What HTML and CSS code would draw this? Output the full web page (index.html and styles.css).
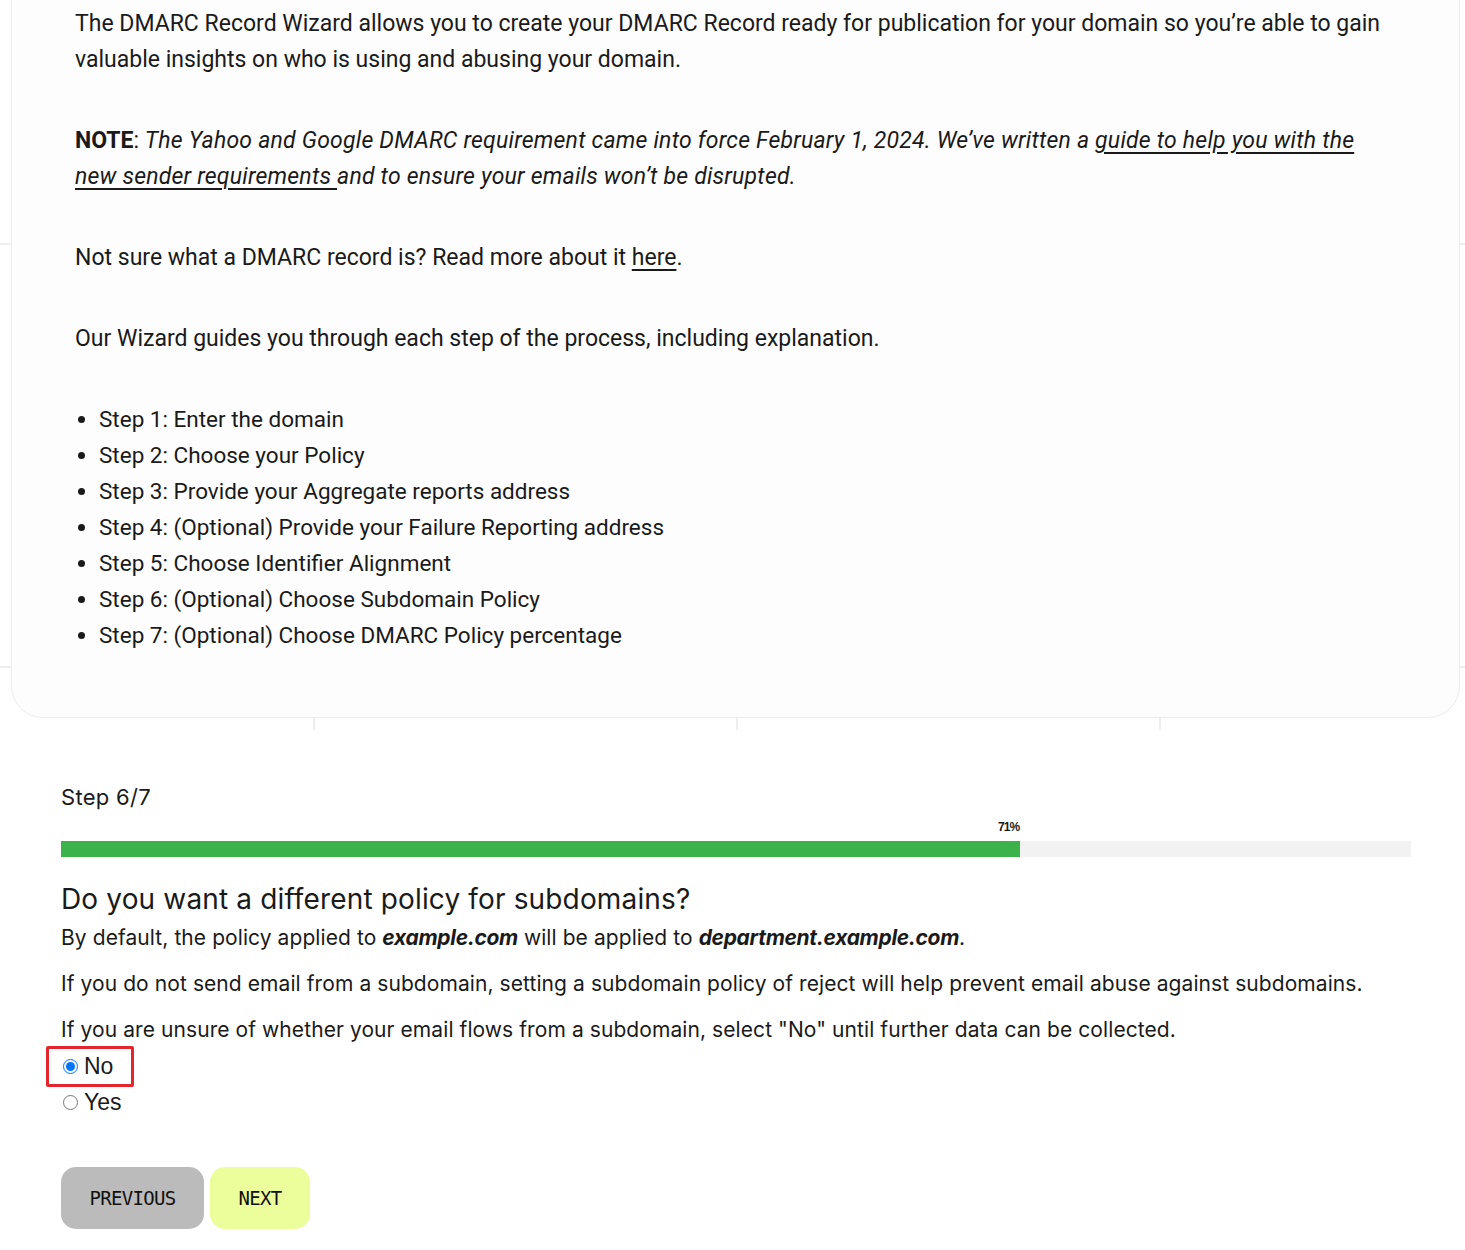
FILE: index.html
```html
<!DOCTYPE html>
<html lang="en">
<head>
    <meta charset="UTF-8">
    <meta name="viewport" content="width=device-width, initial-scale=1.0">
    <title>DMARC Record Wizard</title>
    <link rel="stylesheet" href="styles.css">
</head>
<body>
    <div class="grid-section">
        <div class="intro-card">
            <p>The DMARC Record Wizard allows you to create your DMARC Record ready for publication for your domain so you’re able to gain valuable insights on who is using and abusing your domain.</p>
            <p><strong>NOTE</strong>: <em>The Yahoo and Google DMARC requirement came into force February 1, 2024. We’ve written a <a href="#">guide to help you with the new sender requirements </a>and to ensure your emails won’t be disrupted.</em></p>
            <p>Not sure what a DMARC record is? Read more about it <a href="#">here</a>.</p>
            <p>Our Wizard guides you through each step of the process, including explanation.</p>
            <ul class="steps">
                <li>Step 1: Enter the domain</li>
                <li>Step 2: Choose your Policy</li>
                <li>Step 3: Provide your Aggregate reports address</li>
                <li>Step 4: (Optional) Provide your Failure Reporting address</li>
                <li>Step 5: Choose Identifier Alignment</li>
                <li>Step 6: (Optional) Choose Subdomain Policy</li>
                <li>Step 7: (Optional) Choose DMARC Policy percentage</li>
            </ul>
        </div>
    </div>

    <div class="wizard">
        <div class="step-label">Step 6/7</div>
        <div class="progress">
            <div class="progress-text" style="width: 71%">71%</div>
            <div class="progress-track">
                <div class="progress-fill" style="width: 71%"></div>
            </div>
        </div>

        <h2>Do you want a different policy for subdomains?</h2>
        <p class="lead">By default, the policy applied to <em>example.com</em> will be applied to <em>department.example.com</em>.</p>
        <p>If you do not send email from a subdomain, setting a subdomain policy of reject will help prevent email abuse against subdomains.</p>
        <p class="last">If you are unsure of whether your email flows from a subdomain, select "No" until further data can be collected.</p>

        <div class="options">
            <label class="option selected"><input type="radio" name="sp" value="no" checked> No</label>
            <label class="option"><input type="radio" name="sp" value="yes"> Yes</label>
        </div>

        <div class="actions">
            <button class="btn btn-prev">PREVIOUS</button>
            <button class="btn btn-next">NEXT</button>
        </div>
    </div>
</body>
</html>
```

FILE: styles.css
```css
body {
    margin: 0;
    font-family: Roboto, sans-serif;
    color: #1a1a1a;
    background: #fff;
}
.grid-section {
    height: 730px;
    overflow: hidden;
    background-color: #fff;
    background-image:
        linear-gradient(to right, #eeeeee 2px, transparent 2px),
        linear-gradient(to bottom, #eeeeee 2px, transparent 2px);
    background-size: 423px 423px;
    background-position: 313px 243px;
}
.intro-card {
    margin: -40px 5px 0 11px;
    padding: 45px 64px 64px 63px;
    background: #fdfdfd;
    border: 1.5px solid #ececec;
    border-radius: 32px;
    font-size: 23px;
    line-height: 36px;
}
.intro-card p {
    margin: 0 0 45px;
}
.intro-card p:nth-child(4) {
    margin-bottom: 44px;
}
.intro-card em {
    letter-spacing: 0.22px;
}
.intro-card a {
    color: #1a1a1a;
    text-decoration: underline;
    text-underline-offset: 4px;
}
.intro-card strong {
    font-weight: 700;
}
.steps {
    margin: 0;
    padding-left: 24px;
    font-size: 22.5px;
}
.wizard {
    margin: 0 54px 0 61px;
    padding-top: 52px;
    font-family: Inter, sans-serif;
    color: #1a1a1a;
}
.step-label {
    font-size: 22px;
    line-height: 30px;
    letter-spacing: 0.3px;
}
.progress {
    margin-top: 7px;
}
.progress-text {
    text-align: right;
    font-family: "Liberation Sans", Arial, sans-serif;
    font-size: 12px;
    font-weight: 700;
    letter-spacing: -0.8px;
    line-height: 16px;
    margin-bottom: 6px;
}
.progress-track {
    height: 16px;
    background: #f2f2f2;
}
.progress-fill {
    height: 100%;
    background: #3cb34a;
}
h2 {
    margin: 24px 0 6px;
    font-size: 28px;
    font-weight: 400;
    line-height: 37px;
    letter-spacing: 0.15px;
}
.wizard p {
    margin: 0 0 18px;
    font-size: 21px;
    line-height: 28px;
    letter-spacing: 0.08px;
}
.wizard p.last {
    margin-bottom: 2px;
}
.wizard em {
    font-weight: 700;
    letter-spacing: -0.3px;
}
.options {
    display: flex;
    flex-direction: column;
    align-items: flex-start;
}
.option {
    display: flex;
    align-items: center;
    gap: 6px;
    font-family: "Liberation Sans", Arial, sans-serif;
    font-size: 23px;
    line-height: 35px;
    padding: 0 18px 0 14px;
    border: 3px solid transparent;
    margin-left: -15px;
}
.option + .option {
    margin-top: -5px;
}
.option.selected {
    border-color: #e3262e;
    border-radius: 2px;
}
.option input {
    margin: 0;
    width: 15px;
    height: 15px;
}
.actions {
    display: flex;
    gap: 6px;
    margin-top: 44px;
}
.btn {
    height: 62px;
    border: none;
    border-radius: 15px;
    font-family: "DejaVu Sans Mono", monospace;
    font-size: 19px;
    letter-spacing: -0.7px;
    color: #111;
    cursor: pointer;
}
.btn-prev {
    width: 143px;
    background: #bbbbbb;
}
.btn-next {
    width: 100px;
    background: #ecfe9c;
}
```
